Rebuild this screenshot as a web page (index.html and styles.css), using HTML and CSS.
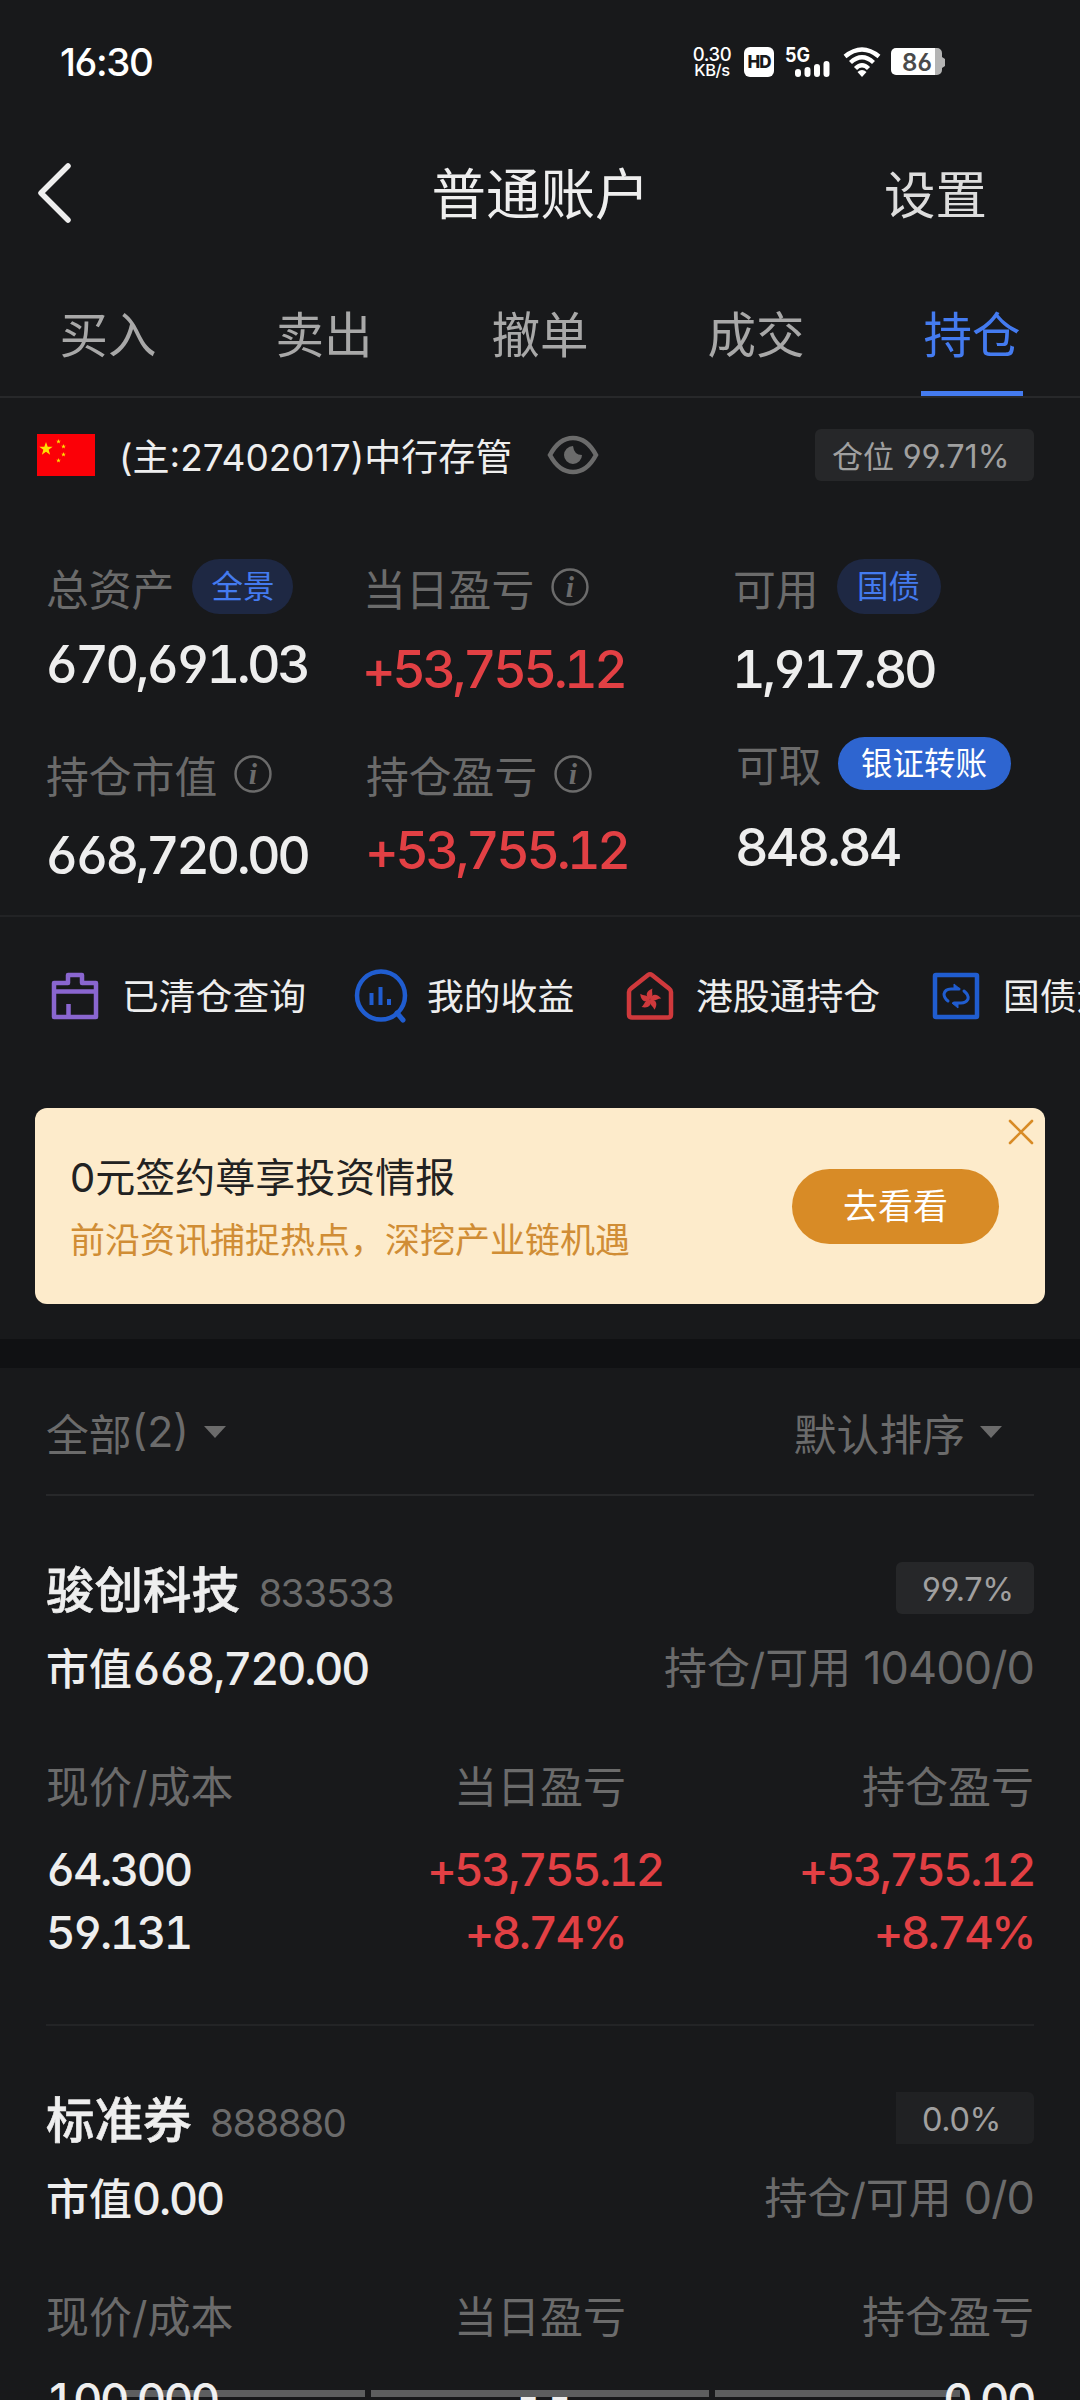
FILE: index.html
```html
<!DOCTYPE html>
<html lang="zh-CN">
<head>
  <meta charset="UTF-8" />
  <meta name="viewport" content="width=device-width, initial-scale=1.0" />
  <title>普通账户</title>
  <link rel="stylesheet" href="styles.css">
</head>
<body>
  <svg width="0" height="0" class="sprite">
    <symbol id="info" viewBox="0 0 37 37">
      <circle cx="18.5" cy="18.5" r="17" fill="none" stroke="#6b6b6b" stroke-width="2.4" />
      <text x="18.5" y="28" text-anchor="middle" font-family="Liberation Serif, serif" font-style="italic" font-weight="bold" font-size="29" fill="#6b6b6b">i</text>
    </symbol>
    <symbol id="star" viewBox="-10 -10 20 20">
      <path d="M0-10 2.4-3.1H9.5L3.8 1.2 5.9 8.1 0 4-5.9 8.1-3.8 1.2-9.5-3.1H-2.4Z" />
    </symbol>
  </svg>

  <div class="status-bar">
    <span class="time">16:30</span>
    <div class="status-icons">
      <div class="speed"><span>0.30</span><span>KB/s</span></div>
      <span class="hd">HD</span>
      <svg class="signal" width="46" height="32" viewBox="0 0 46 32">
        <text x="0" y="15.5" font-family="Inter, sans-serif" font-weight="700" font-size="20" textLength="25" lengthAdjust="spacingAndGlyphs" fill="#fff">5G</text>
        <g stroke="#fff" stroke-width="6" stroke-linecap="round">
          <path d="M13 26v2M22.5 24v4M32 21v7M41.5 18v10" />
        </g>
      </svg>
      <svg class="wifi" width="38" height="30" viewBox="0 0 38 30">
        <g fill="none" stroke="#fff" stroke-width="4.4">
          <path d="M2 9.5Q19-4.500 36 9.500" />
          <path d="M7.500 15.500Q19 5 30.500 15.500" />
          <path d="M12.500 21.500Q19 15 25.500 21.500" />
        </g>
        <path d="M14.500 25Q19 21 23.500 25L19 30Z" fill="#fff" />
      </svg>
      <svg class="battery" width="54" height="28" viewBox="0 0 54 28">
        <path d="M44 0h2a5 5 0 0 1 5 5v4l3 2v7l-3 2v2a5 5 0 0 1-5 5h-2z" fill="#b4b4b4" />
        <path d="M5 0h39v27H5a5 5 0 0 1-5-5V5a5 5 0 0 1 5-5z" fill="#fff" />
        <text x="11" y="22.500" font-family="Inter, sans-serif" font-weight="600" font-size="24" textLength="30" fill="#4a4a4a">86</text>
      </svg>
    </div>
  </div>

  <div class="header">
    <svg class="back" width="34" height="60" viewBox="0 0 34 60">
      <path d="M31 3 4 30l27 27" fill="none" stroke="#eee" stroke-width="5.5" stroke-linecap="round" stroke-linejoin="round" />
    </svg>
    <h1>普通账户</h1>
    <a class="settings">设置</a>
  </div>

  <div class="tabs">
    <div class="tab">买入</div>
    <div class="tab">卖出</div>
    <div class="tab">撤单</div>
    <div class="tab">成交</div>
    <div class="tab active">持仓</div>
  </div>

  <div class="account">
    <svg class="flag" width="58" height="42" viewBox="0 0 58 42">
      <rect width="58" height="42" fill="#fb0007" />
      <g fill="#ffe100">
        <use href="#star" x="2" y="8" width="14" height="14" />
        <use href="#star" x="19" y="5" width="5" height="5" />
        <use href="#star" x="24" y="10" width="5" height="5" />
        <use href="#star" x="24" y="18" width="5" height="5" />
        <use href="#star" x="19" y="24" width="5" height="5" />
      </g>
    </svg>
    <span class="account-name">(主:27402017)中行存管</span>
    <svg class="eye" width="52" height="40" viewBox="0 0 52 40">
      <path d="M3 20Q12 3 26 3T49 20Q40 37 26 37T3 20Z" fill="none" stroke="#6b6b6b" stroke-width="4.500" />
      <path d="M26 11a9 9 0 1 0 9 9q-8 0-9-9z" fill="#6b6b6b" />
    </svg>
    <span class="tag position">仓位 <span>99.71%</span></span>
  </div>

  <div class="assets">
    <div class="asset-row">
      <div class="asset up">
        <div class="label">总资产<span class="pill p1">全景</span></div>
        <div class="value">670,691.03</div>
      </div>
      <div class="asset">
        <div class="label">当日盈亏<svg class="info"><use href="#info" /></svg></div>
        <div class="value red">+53,755.12</div>
      </div>
      <div class="asset">
        <div class="label">可用<span class="pill p2">国债</span></div>
        <div class="value">1,917.80</div>
      </div>
    </div>
    <div class="asset-row second">
      <div class="asset down">
        <div class="label">持仓市值<svg class="info"><use href="#info" /></svg></div>
        <div class="value">668,720.00</div>
      </div>
      <div class="asset">
        <div class="label">持仓盈亏<svg class="info"><use href="#info" /></svg></div>
        <div class="value red">+53,755.12</div>
      </div>
      <div class="asset transfer">
        <div class="label">可取<span class="pill solid">银证转账</span></div>
        <div class="value">848.84</div>
      </div>
    </div>
  </div>

  <div class="shortcuts">
    <div class="shortcut s1">
      <svg width="48" height="48" viewBox="0 0 48 48">
        <path d="M3 19.500V11H17V3H31V11H45V19.500ZM3 19.500V45H45V19.500M17.500 45V32" fill="none" stroke="#8a66d0" stroke-width="4.500" stroke-linejoin="round" />
      </svg>
      <span>已清仓查询</span>
    </div>
    <div class="shortcut s2">
      <svg width="54" height="54" viewBox="0 0 54 54">
        <circle cx="27" cy="26.500" r="24" fill="none" stroke="#205dd0" stroke-width="4.500" />
        <path d="M17.500 24v12M26.500 18v18M35 30v6" stroke="#205dd0" stroke-width="4" />
        <path d="M43 44l6 7" stroke="#205dd0" stroke-width="5" stroke-linecap="round" />
      </svg>
      <span>我的收益</span>
    </div>
    <div class="shortcut s3">
      <svg width="48" height="50" viewBox="0 0 48 50">
        <path d="M5 17.500 22 4Q24 2.500 26 4L43 17.500Q45 19 45 21V43.500Q45 46.500 42 46.500H6Q3 46.500 3 43.500V21Q3 19 5 17.500Z" fill="none" stroke="#cf393c" stroke-width="4.500" />
        <g fill="#cf393c" transform="translate(24 28.500)">
          <path id="petal" d="M0 0C-6-4-3-9 2.500-11C1-7 4.500-4 0 0Z" />
          <use href="#petal" transform="rotate(72)" />
          <use href="#petal" transform="rotate(144)" />
          <use href="#petal" transform="rotate(216)" />
          <use href="#petal" transform="rotate(288)" />
        </g>
      </svg>
      <span>港股通持仓</span>
    </div>
    <div class="shortcut s4">
      <svg width="48" height="48" viewBox="0 0 48 48">
        <rect x="3" y="3" width="42" height="42" rx="1" fill="none" stroke="#205dd0" stroke-width="4.500" />
        <path d="M16 29Q12 26 12 22Q13 17 19 17H27M32 19Q37 23 36 27Q34 31 29 31H22" fill="none" stroke="#205dd0" stroke-width="3" stroke-linecap="round" />
        <path d="M22 12l6 5h-6zM26 36l-6-5h6z" fill="#205dd0" stroke="#205dd0" />
      </svg>
      <span>国债逆回购</span>
    </div>
  </div>

  <div class="banner">
    <div class="banner-text">
      <div class="banner-title">0元签约尊享投资情报</div>
      <div class="banner-sub">前沿资讯捕捉热点，深挖产业链机遇</div>
    </div>
    <div class="banner-btn">去看看</div>
    <svg class="close" width="26" height="26" viewBox="0 0 26 26">
      <path d="M2 2 24 24M24 2 2 24" stroke="#d88b26" stroke-width="2.600" stroke-linecap="round" />
    </svg>
  </div>

  <div class="gap"></div>

  <div class="list">
    <div class="filter">
      <span class="filter-item all">全部<span>(2)</span></span>
      <span class="filter-item sort">默认排序</span>
    </div>

    <div class="holding">
      <div class="line name-line">
        <span class="name">骏创科技</span>
        <span class="code">833533</span>
        <span class="tag pct">99.7%</span>
      </div>
      <div class="line market-line">
        <span class="market">市值<span>668,720.00</span></span>
        <span class="avail">持仓/可用 <span>10400/0</span></span>
      </div>
      <div class="cols heads">
        <span>现价/成本</span><span>当日盈亏</span><span>持仓盈亏</span>
      </div>
      <div class="cols nums">
        <span>64.300</span><span class="red">+53,755.12</span><span class="red">+53,755.12</span>
      </div>
      <div class="cols nums">
        <span>59.131</span><span class="red">+8.74%</span><span class="red">+8.74%</span>
      </div>
    </div>

    <div class="holding">
      <div class="line name-line">
        <span class="name">标准券</span>
        <span class="code">888880</span>
        <span class="tag pct zero">0.0%</span>
      </div>
      <div class="line market-line">
        <span class="market">市值<span>0.00</span></span>
        <span class="avail">持仓/可用 <span>0/0</span></span>
      </div>
      <div class="cols heads">
        <span>现价/成本</span><span>当日盈亏</span><span>持仓盈亏</span>
      </div>
      <div class="cols nums">
        <span>100.000</span><span class="dash">--</span><span>0.00</span>
      </div>
    </div>
  </div>

  <div class="nav-hint"><i></i><i></i><i></i></div>
</body>
</html>
```
FILE: styles.css
```css
* {
  box-sizing: border-box;
  margin: 0;
  padding: 0;
}

html, body {
  width: 1080px;
  height: 2400px;
  overflow: hidden;
}

body {
  position: relative;
  background: #18191b;
  color: #eee;
  font-family: Inter, "Noto Sans CJK SC", sans-serif;
  font-feature-settings: "cv03", "cv04";
  white-space: nowrap;
}

svg {
  display: block;
  flex: none;
}

.sprite {
  display: none;
}

.red {
  color: #e24044;
}

/* status bar */
.status-bar {
  display: flex;
  align-items: center;
  justify-content: space-between;
  height: 124px;
  padding: 0 135px 0 60px;
  color: #fff;
}

.time {
  font-size: 38.5px;
  font-weight: 450;
  letter-spacing: -1.4px;
}

.status-icons {
  display: flex;
  align-items: center;
}

.speed {
  display: flex;
  flex-direction: column;
  align-items: center;
  width: 38px;
  margin-right: 13px;
  font-size: 18.5px;
  font-weight: 500;
  line-height: 16px;
  letter-spacing: -0.4px;
}

.speed span:last-child {
  font-size: 16.5px;
}

.hd {
  width: 30px;
  height: 30px;
  margin-right: 11px;
  border-radius: 6px;
  background: #fff;
  color: #18191b;
  font-size: 17px;
  font-weight: 800;
  line-height: 30px;
  text-align: center;
  letter-spacing: -1px;
}

.signal {
  margin-right: 12px;
}

.wifi {
  margin-right: 10px;
}

/* header */
.header {
  display: flex;
  align-items: center;
  height: 138px;
  padding: 0 93px 0 37px;
}

.header h1 {
  flex: 1;
  padding: 0 0 5px 126px;
  font-size: 54.5px;
  font-weight: 400;
  text-align: center;
}

.settings {
  padding-bottom: 3px;
  color: #ddd;
  font-size: 51.5px;
}

/* tabs */
.tabs {
  display: flex;
  height: 136px;
  border-bottom: 2px solid #27282a;
}

.tab {
  display: flex;
  flex-direction: column;
  align-items: center;
  width: 216px;
  padding-top: 44px;
  color: #a8a8a8;
  font-size: 48.5px;
  line-height: 60px;
}

.tab.active {
  color: #447bf0;
}

.tab.active::after {
  content: "";
  width: 102px;
  height: 6px;
  margin-top: 25px;
  background: #447bf0;
}

/* account */
.account {
  display: flex;
  align-items: center;
  height: 114px;
  padding: 0 46px 0 37px;
}

.account-name {
  margin-left: 24px;
  font-size: 37px;
}

.eye {
  margin-left: 35px;
}

.tag {
  height: 52px;
  margin-left: auto;
  border-radius: 6px;
  background: #262729;
  color: #a0a0a0;
  line-height: 56px;
}

.position {
  width: 219px;
  padding-left: 17px;
  font-size: 31px;
}

.position span {
  font-size: 32.5px;
}

/* assets */
.assets {
  height: 405px;
  padding: 47px 0 0 46px;
  border-bottom: 2px solid #222325;
}

.asset-row {
  display: grid;
  grid-template-columns: 317px 370px 1fr;
  height: 178px;
}

.asset-row.second {
  grid-template-columns: 320px 370px 1fr;
}

.label {
  display: flex;
  align-items: center;
  height: 55px;
  color: #6b6b6b;
  font-size: 42.8px;
}

.value {
  padding-top: 26px;
  margin-left: -1px;
  font-size: 52px;
  font-weight: 500;
  font-variant-numeric: tabular-nums;
  line-height: 60px;
  letter-spacing: -3.5px;
}

.up .value {
  padding-top: 21px;
}

.asset-row.second .label {
  margin-top: 9px;
}

.second .value {
  padding-top: 20px;
}

.second .down .value {
  padding-top: 25px;
}

.second .transfer .label {
  height: 52px;
  margin-top: 0;
}

.second .transfer .value {
  padding-top: 29px;
  letter-spacing: -3px;
}

.info {
  width: 38px;
  height: 38px;
  margin-left: 17px;
}

.pill {
  height: 55px;
  margin-left: 18px;
  border-radius: 28px;
  background: #1e2843;
  color: #447bf0;
  font-size: 31.5px;
  line-height: 55px;
  text-align: center;
}

.p1 {
  width: 101px;
}

.p2 {
  width: 104px;
}

.pill.solid {
  width: 173px;
  height: 53px;
  margin-left: 16px;
  background: #2e65d0;
  color: #fff;
  line-height: 53px;
}

/* shortcuts */
.shortcuts {
  display: flex;
  align-items: center;
  height: 158px;
  padding-left: 51px;
  font-size: 36.8px;
  overflow: hidden;
}

.shortcut {
  display: flex;
  flex: none;
  align-items: center;
  gap: 23px;
}

.shortcut span {
  padding-bottom: 4px;
}

.s1 { width: 303px; }
.s2 { width: 272px; gap: 19px; }
.s3 { width: 306px; gap: 22px; }

/* banner */
.banner {
  position: relative;
  display: flex;
  align-items: center;
  justify-content: space-between;
  height: 196px;
  margin: 33px 35px 35px;
  padding: 0 46px 0 35px;
  border-radius: 12px;
  background: #fdebcb;
}

.banner-text {
  padding-top: 6px;
}

.banner-title {
  color: #222;
  font-size: 40px;
  line-height: 62px;
}

.banner-sub {
  color: #d08d35;
  font-size: 35px;
  line-height: 62px;
}

.banner-btn {
  width: 207px;
  height: 75px;
  border-radius: 38px;
  background: #d88b26;
  color: #fff;
  font-size: 35px;
  line-height: 75px;
  text-align: center;
}

.close {
  position: absolute;
  top: 11px;
  right: 11px;
}

.gap {
  height: 29px;
  background: #101113;
}

/* list */
.list {
  padding: 0 46px;
}

.filter {
  display: flex;
  justify-content: space-between;
  height: 128px;
  padding: 1px 32px 0 0;
  border-bottom: 2px solid #27282a;
  color: #6b6b6b;
  font-size: 42.8px;
}

.filter-item {
  display: flex;
  align-items: center;
}

.filter-item::after {
  content: "";
  margin: 0 0 0 15px;
  border: 11px solid transparent;
  border-top: 12px solid #6b6b6b;
  border-bottom: 0;
}

.holding {
  height: 530px;
  padding-top: 52px;
  border-bottom: 2px solid #232426;
}

.line {
  display: flex;
  align-items: center;
}

.name-line {
  height: 80px;
}

.name {
  padding-bottom: 3px;
  font-size: 48.5px;
  font-weight: 500;
  -webkit-text-stroke: 0.6px #eee;
}

.code {
  padding-top: 10px;
  margin-left: 18px;
  color: #6b6b6b;
  font-size: 38.5px;
  font-variant-numeric: tabular-nums;
  letter-spacing: -2.4px;
}

.pct {
  width: 138px;
  padding-left: 26px;
  font-size: 32.5px;
  letter-spacing: -0.4px;
}

.pct.zero {
  border-radius: 0 6px 6px 0;
  background: #202123;
}

.market-line {
  justify-content: space-between;
  height: 76px;
}

.market {
  font-size: 43px;
  font-weight: 500;
}

.market span {
  font-size: 45px;
  font-variant-numeric: tabular-nums;
  letter-spacing: -2.1px;
}

.avail {
  padding-bottom: 2px;
  color: #6b6b6b;
  font-size: 42.9px;
}

.avail span {
  font-size: 45px;
  letter-spacing: -0.9px;
}

.cols {
  display: grid;
  grid-template-columns: 1fr 1fr 1fr;
  text-align: center;
}

.cols span:first-child {
  text-align: left;
}

.cols span:last-child {
  text-align: right;
}

.heads {
  height: 134px;
  padding-top: 53px;
  color: #6b6b6b;
  font-size: 43px;
  line-height: 60px;
}

.nums {
  height: 63px;
  font-size: 45.5px;
  font-weight: 500;
  font-variant-numeric: tabular-nums;
  line-height: 63px;
  letter-spacing: -2.5px;
}

.nums span:nth-child(2) {
  padding-left: 10px;
}

.nums .dash {
  font-feature-settings: "case";
  font-weight: 600;
  letter-spacing: 2px;
}

/* system navigation hint over the page bottom */
.nav-hint {
  position: absolute;
  left: 120px;
  bottom: 3px;
  display: flex;
  gap: 6px;
}

.nav-hint i {
  width: 245px;
  height: 7px;
  background: rgba(255, 255, 255, 0.3);
}

.nav-hint i:nth-child(2) {
  width: 338px;
}
```
